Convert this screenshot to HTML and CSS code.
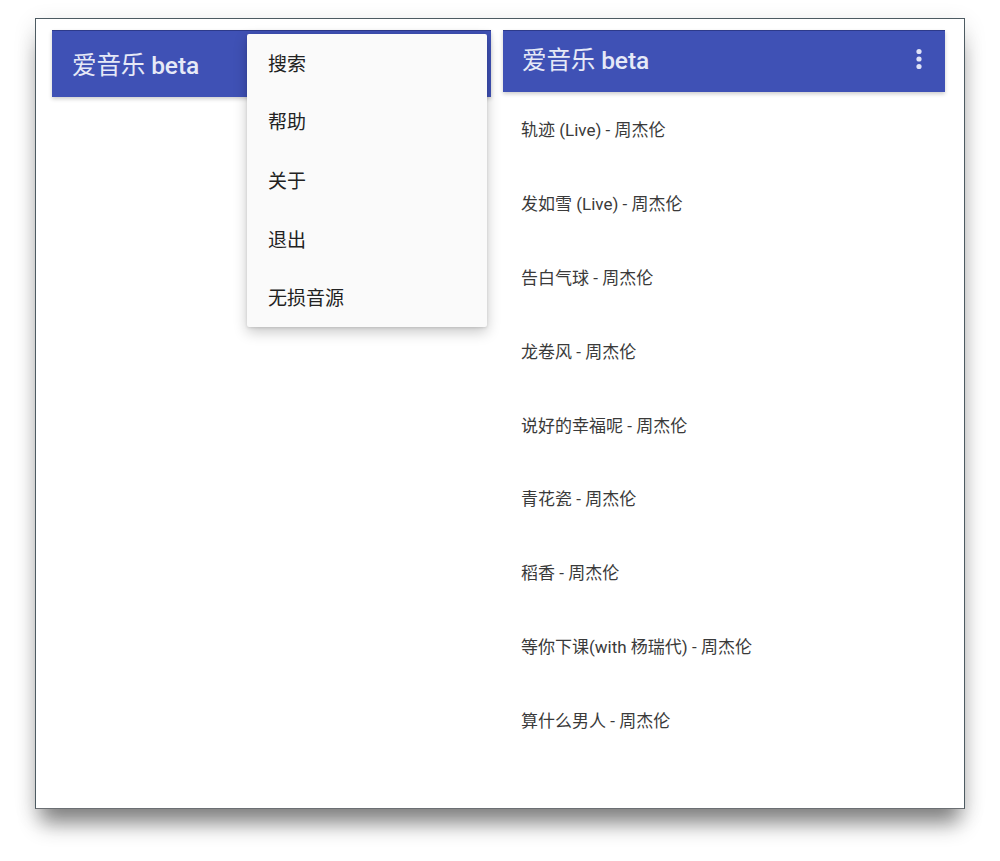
FILE: index.html
```html
<!DOCTYPE html>
<html lang="zh-CN">
<head>
  <meta charset="UTF-8" />
  <title>爱音乐 beta</title>
  <link rel="stylesheet" href="styles.css">
</head>
<body>
  <div class="frame">
    <div class="screen screen-left">
      <div class="app-bar tall">
        <span class="title">爱音乐 <span class="beta">beta</span></span>
      </div>
      <ul class="menu">
        <li>搜索</li>
        <li>帮助</li>
        <li>关于</li>
        <li>退出</li>
        <li>无损音源</li>
      </ul>
    </div>

    <div class="screen screen-right">
      <div class="app-bar">
        <span class="title">爱音乐 <span class="beta">beta</span></span>
        <svg class="more" width="8" height="22" viewBox="0 0 8 22">
          <circle cx="4" cy="3.5" r="2.6" fill="#dfe3f7"/>
          <circle cx="4" cy="11" r="2.6" fill="#dfe3f7"/>
          <circle cx="4" cy="18.5" r="2.6" fill="#dfe3f7"/>
        </svg>
      </div>
      <ul class="songs">
        <li>轨迹 (Live) - 周杰伦</li>
        <li>发如雪 (Live) - 周杰伦</li>
        <li>告白气球 - 周杰伦</li>
        <li>龙卷风 - 周杰伦</li>
        <li>说好的幸福呢 - 周杰伦</li>
        <li>青花瓷 - 周杰伦</li>
        <li>稻香 - 周杰伦</li>
        <li>等你下课(with 杨瑞代) - 周杰伦</li>
        <li>算什么男人 - 周杰伦</li>
      </ul>
    </div>
  </div>
</body>
</html>
```

FILE: styles.css
```css
html, body {
  margin: 0;
  padding: 0;
  background: #fff;
  font-family: Roboto, "Noto Sans CJK SC", sans-serif;
}
body {
  min-height: 100vh;
  padding-top: 18px;
  box-sizing: border-box;
}
.frame {
  box-sizing: border-box;
  margin-left: 35px;
  width: 930px;
  height: 791px;
  border: 1px solid #4d5b62;
  border-bottom-color: #6b6f73;
  background: #fff;
  padding: 11px 19px 0 16px;
  display: grid;
  grid-template-columns: 439px 442px;
  column-gap: 12px;
  align-items: start;
  box-shadow: 0 20px 20px -6px rgba(0, 0, 0, 0.45), 0 6px 22px rgba(0, 0, 0, 0.12);
}
.screen {
  position: relative;
}
.app-bar {
  height: 62px;
  background: #3f51b5;
  border-top: 1px solid #2d3a8a;
  box-sizing: border-box;
  display: flex;
  align-items: center;
  justify-content: space-between;
  padding: 0 22px 7px 19px;
  box-shadow: 0 2px 4px rgba(0, 0, 0, 0.2);
}
.app-bar.tall {
  height: 67px;
  padding: 0 0 2px 20px;
}
.title {
  color: #e6e9f7;
  font-size: 24.5px;
  letter-spacing: -0.1px;
}
.beta {
  font-weight: 500;
}
.more {
  display: block;
  margin-top: 2px;
}
.menu {
  position: absolute;
  left: 195px;
  top: 4px;
  width: 240px;
  margin: 0;
  padding: 0;
  list-style: none;
  background: #fafafa;
  border-radius: 2px;
  box-shadow: 0 5px 14px rgba(0, 0, 0, 0.22), 0 1px 3px rgba(0, 0, 0, 0.12);
}
.menu li {
  height: 58.6px;
  display: flex;
  align-items: center;
  padding: 0 0 2px 21px;
  box-sizing: border-box;
  font-size: 19px;
  color: #222;
}
.songs {
  margin: 0;
  padding: 0;
  list-style: none;
}
.songs li {
  height: 73.8px;
  display: flex;
  align-items: center;
  padding-left: 18px;
  font-size: 17px;
  color: #3a3a3a;
}
```
